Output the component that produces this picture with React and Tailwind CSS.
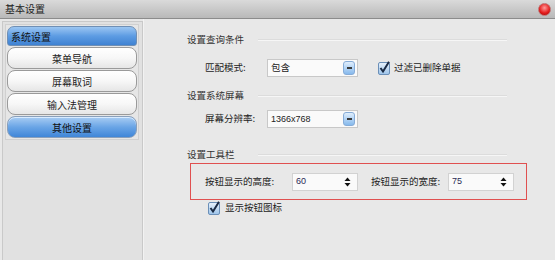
import React from "react";

const font = { fontFamily: '"Noto Sans CJK SC", "Noto Sans", sans-serif' };
const num = { fontFamily: '"Liberation Sans", sans-serif' };

function DropBtn() {
  return (
    <div className="w-[12px] h-[14px] rounded-[3px] border border-[#86acd8] bg-gradient-to-b from-[#e0eefc] to-[#86b9ec] flex items-center justify-center">
      <div className="w-[5px] h-[2px] bg-[#3a3a3a]" />
    </div>
  );
}

function Select({ value, isNum }) {
  return (
    <div className="w-[91px] h-[18px] bg-[#fafafa] border border-[#c8c8c8] flex items-center justify-between pl-[3px] pr-[2px]">
      <span className={isNum ? "text-[9px] leading-none text-[#222]" : "text-[9.5px] leading-none text-[#222]"} style={isNum ? num : undefined}>{value}</span>
      <DropBtn />
    </div>
  );
}

function Spin({ value }) {
  return (
    <div className="w-[66px] h-[18px] bg-[#fafafa] border border-[#d2d2d2] flex items-center justify-between pl-[3px] pr-[6px]">
      <span className="text-[9px] leading-none text-[#2a2a55]" style={num}>{value}</span>
      <svg width="7" height="10" viewBox="0 0 7 10">
        <path d="M3.5 0.5 L6.5 4 L0.5 4 Z" fill="#111" />
        <path d="M3.5 9.5 L6.5 6 L0.5 6 Z" fill="#111" />
      </svg>
    </div>
  );
}

function Check() {
  return (
    <svg width="13" height="14" viewBox="0 0 13 14">
      <defs>
        <linearGradient id="cb" x1="0" y1="0" x2="0" y2="1">
          <stop offset="0" stopColor="#e8f2fc" />
          <stop offset="1" stopColor="#9cc3ea" />
        </linearGradient>
      </defs>
      <rect x="0.5" y="1.5" width="11" height="12" rx="1.5" fill="url(#cb)" stroke="#6b8fb8" />
      <path d="M2.5 7 L5 10.5 L11 0.8" fill="none" stroke="#1a2a44" strokeWidth="2" />
    </svg>
  );
}

function Section({ title }) {
  return (
    <div className="flex items-center h-[14px]">
      <span className="text-[9.5px] leading-none text-[#333] w-[71px]">{title}</span>
      <div className="flex-1 h-[2px] border-t border-[#dcdcdc] bg-[#f6f6f6]" />
    </div>
  );
}

function NavBtn({ label, active }) {
  if (active) {
    return (
      <div className="h-[22px] rounded-[8px] border border-[#8aa0bb] bg-gradient-to-b from-[#a9cdf3] via-[#6aa5e6] to-[#3f86d8] flex items-center justify-center text-[10px] text-[#111] shadow-[inset_0_1px_0_#d8ebff]">
        {label}
      </div>
    );
  }
  return (
    <div className="h-[22px] rounded-[8px] border border-[#9a9a9a] bg-gradient-to-b from-[#ffffff] via-[#f7f7f7] to-[#e6e6e6] flex items-center justify-center text-[10px] text-[#222]">
      {label}
    </div>
  );
}

export default function App() {
  return (
    <div className="w-[555px] h-[260px] bg-[#e8e8e8] overflow-hidden flex flex-col" style={font}>
      <div className="h-[19px] shrink-0 bg-gradient-to-b from-[#dadada] to-[#b9b9b9] border-b border-[#8c8c8c] flex items-center justify-between pl-[5px] pr-[4px]">
        <span className="text-[10px] leading-none text-[#222]">基本设置</span>
        <div className="w-[13px] h-[13px] rounded-full bg-[radial-gradient(circle_at_50%_35%,#ff9a9a_0%,#e62020_55%,#a00000_100%)] border border-[#c07070]" />
      </div>
      <div className="flex flex-1">
        <div className="w-[141px] ml-[2px] mt-[2px] bg-[#e1e1e1] border-l border-t border-r border-[#c9c9c9] pt-[2px] pl-[2px] pr-[3px]">
          <div className="border border-[#d0d0d0] bg-[#e6e6e6] p-[1px] flex flex-col gap-[1px]">
            <div className="h-[20px] rounded-t-[7px] rounded-b-[3px] border border-[#6f8fb5] bg-gradient-to-b from-[#9cc6f2] via-[#5d9ce3] to-[#3f82d2] flex items-center pl-[3px] text-[10px] text-[#111]">
              系统设置
            </div>
            <NavBtn label="菜单导航" />
            <NavBtn label="屏幕取词" />
            <NavBtn label="输入法管理" />
            <NavBtn label="其他设置" active />
          </div>
        </div>
        <div className="flex-1 border-l border-[#f2f2f2] pt-[14px] pl-[43px] pr-[48px]">
          <Section title="设置查询条件" />
          <div className="flex items-center mt-[12px] h-[18px]">
            <span className="text-[9.5px] leading-none text-[#222] w-[80px] pl-[18px]">匹配模式:</span>
            <Select value="包含" />
            <div className="ml-[20px] flex items-center gap-[3px]">
              <Check />
              <span className="text-[9.5px] leading-none text-[#222]">过滤已删除单据</span>
            </div>
          </div>
          <div className="mt-[12px]">
            <Section title="设置系统屏幕" />
          </div>
          <div className="flex items-center mt-[7px] h-[18px]">
            <span className="text-[9.5px] leading-none text-[#222] w-[80px] pl-[18px]">屏幕分辨率:</span>
            <Select value="1366x768" isNum />
          </div>
          <div className="mt-[20px]">
            <Section title="设置工具栏" />
          </div>
          <div className="ml-[3px] mr-[-20px] mt-[1px] h-[37px] border-[1.5px] border-[#e05050] flex items-center pl-[14px]">
            <span className="text-[9.5px] leading-none text-[#222] w-[87px]">按钮显示的高度:</span>
            <Spin value="60" />
            <span className="text-[9.5px] leading-none text-[#222] w-[77px] ml-[13px]">按钮显示的宽度:</span>
            <Spin value="75" />
          </div>
          <div className="flex items-center gap-[4px] ml-[21px] mt-[1px]">
            <Check />
            <span className="text-[9.5px] leading-none text-[#222]">显示按钮图标</span>
          </div>
        </div>
      </div>
    </div>
  );
}
